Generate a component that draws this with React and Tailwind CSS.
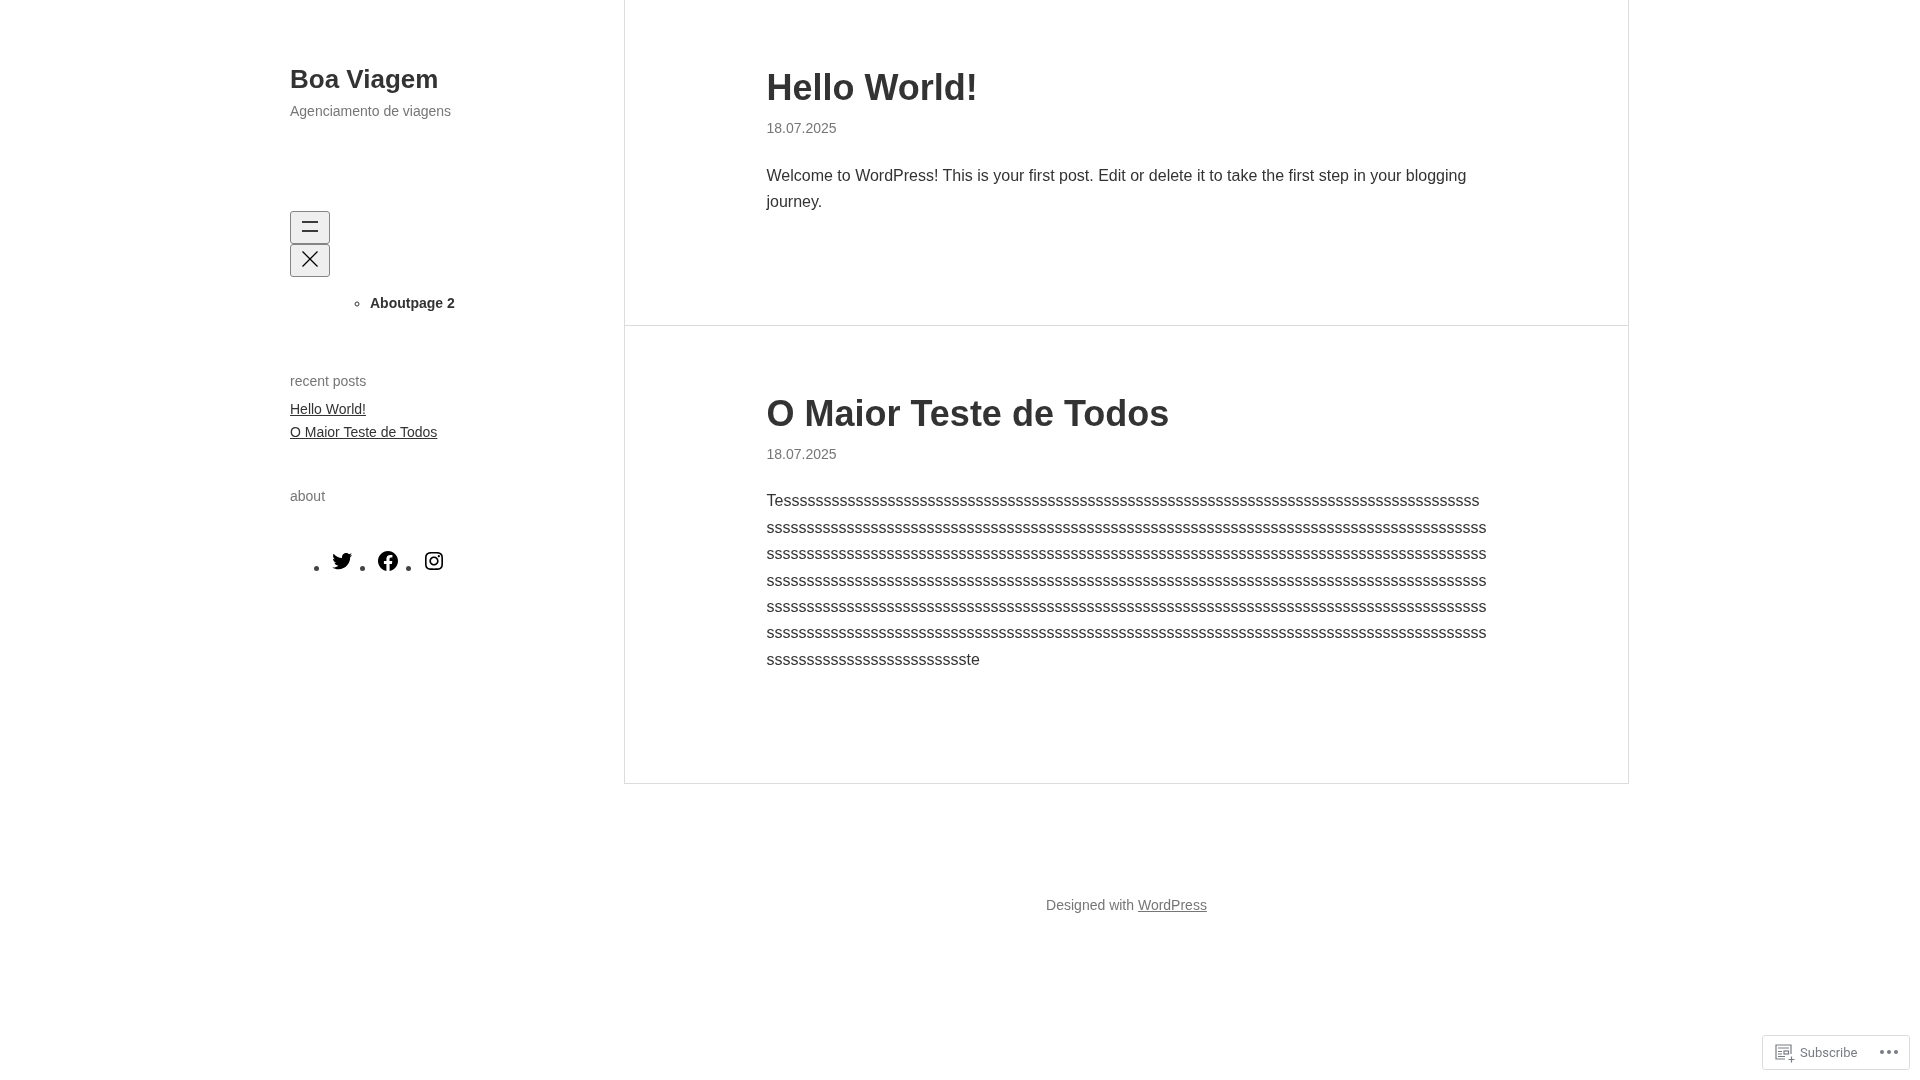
const testBody = "Te" + "s".repeat(561) + "ste";

const postClass = "pl-[141.5px] pr-[141.5px] pt-[67px] pb-[109.5px]";
const titleClass = "text-[36px] leading-[42px] font-bold text-[#333]";
const dateClass = "mt-[9px] text-sm leading-[20px] text-[#767676]";
const bodyClass = "mt-[24.5px] text-base leading-[26.4px] text-[#333] [overflow-wrap:anywhere]";
const widgetTitle = "text-sm leading-[20px] text-[#767676]";

const Twitter = () => (
  <svg viewBox="0 0 24 24" className="w-6 h-6" fill="#000">
    <path d="M22.23 5.924c-.736.326-1.527.547-2.357.646.847-.508 1.498-1.312 1.804-2.27-.793.47-1.67.812-2.606.996C18.325 4.498 17.258 4 16.078 4c-2.266 0-4.103 1.837-4.103 4.103 0 .322.036.635.106.935-3.41-.17-6.433-1.804-8.457-4.287-.353.607-.556 1.312-.556 2.064 0 1.424.724 2.68 1.825 3.415-.673-.022-1.305-.207-1.86-.514v.052c0 1.988 1.415 3.647 3.293 4.023-.344.095-.707.145-1.08.145-.265 0-.522-.026-.773-.074.522 1.63 2.038 2.817 3.833 2.85-1.404 1.1-3.174 1.757-5.096 1.757-.332 0-.66-.02-.98-.057 1.816 1.164 3.973 1.843 6.29 1.843 7.547 0 11.675-6.252 11.675-11.675 0-.178-.004-.355-.012-.53.802-.578 1.497-1.3 2.047-2.132z" />
  </svg>
);

const Facebook = () => (
  <svg viewBox="0 0 24 24" className="w-6 h-6" fill="#000">
    <path d="M12 2C6.5 2 2 6.5 2 12c0 5 3.7 9.1 8.4 9.9v-7H7.9V12h2.5V9.8c0-2.5 1.5-3.9 3.8-3.9 1.1 0 2.2.2 2.2.2v2.5h-1.3c-1.2 0-1.6.8-1.6 1.6V12h2.8l-.4 2.9h-2.3v7C18.3 21.1 22 17 22 12c0-5.5-4.5-10-10-10z" />
  </svg>
);

const Instagram = () => (
  <svg viewBox="0 0 24 24" className="w-6 h-6" fill="#000">
    <path d="M12,4.622c2.403,0,2.688,0.009,3.637,0.052c0.877,0.04,1.354,0.187,1.671,0.31c0.42,0.163,0.72,0.358,1.035,0.673c0.315,0.315,0.51,0.615,0.673,1.035c0.123,0.317,0.27,0.794,0.31,1.671c0.043,0.949,0.052,1.234,0.052,3.637s-0.009,2.688-0.052,3.637c-0.04,0.877-0.187,1.354-0.31,1.671c-0.163,0.42-0.358,0.72-0.673,1.035c-0.315,0.315-0.615,0.51-1.035,0.673c-0.317,0.123-0.794,0.27-1.671,0.31c-0.949,0.043-1.234,0.052-3.637,0.052s-2.688-0.009-3.637-0.052c-0.877-0.04-1.354-0.187-1.671-0.31c-0.42-0.163-0.72-0.358-1.035-0.673c-0.315-0.315-0.51-0.615-0.673-1.035c-0.123-0.317-0.27-0.794-0.31-1.671C4.631,14.688,4.622,14.403,4.622,12s0.009-2.688,0.052-3.637c0.04-0.877,0.187-1.354,0.31-1.671c0.163-0.42,0.358-0.72,0.673-1.035c0.315-0.315,0.615-0.51,1.035-0.673c0.317-0.123,0.794-0.27,1.671-0.31C9.312,4.631,9.597,4.622,12,4.622M12,3C9.556,3,9.249,3.01,8.289,3.054C7.331,3.098,6.677,3.25,6.105,3.472C5.513,3.702,5.011,4.01,4.511,4.511c-0.5,0.5-0.808,1.002-1.038,1.594C3.25,6.677,3.098,7.331,3.054,8.289C3.01,9.249,3,9.556,3,12c0,2.444,0.01,2.751,0.054,3.711c0.044,0.958,0.196,1.612,0.418,2.185c0.23,0.592,0.538,1.094,1.038,1.594c0.5,0.5,1.002,0.808,1.594,1.038c0.572,0.222,1.227,0.375,2.185,0.418C9.249,20.99,9.556,21,12,21s2.751-0.01,3.711-0.054c0.958-0.044,1.612-0.196,2.185-0.418c0.592-0.23,1.094-0.538,1.594-1.038c0.5-0.5,0.808-1.002,1.038-1.594c0.222-0.572,0.375-1.227,0.418-2.185C20.99,14.751,21,14.444,21,12s-0.01-2.751-0.054-3.711c-0.044-0.958-0.196-1.612-0.418-2.185c-0.23-0.592-0.538-1.094-1.038-1.594c-0.5-0.5-1.002-0.808-1.594-1.038c-0.572-0.222-1.227-0.375-2.185-0.418C14.751,3.01,14.444,3,12,3L12,3zM12,7.378c-2.552,0-4.622,2.069-4.622,4.622S9.448,16.622,12,16.622s4.622-2.069,4.622-4.622S14.552,7.378,12,7.378zM12,15c-1.657,0-3-1.343-3-3s1.343-3,3-3s3,1.343,3,3S13.657,15,12,15zM16.804,6.116c-0.596,0-1.08,0.484-1.08,1.08s0.484,1.08,1.08,1.08c0.596,0,1.08-0.484,1.08-1.08S17.401,6.116,16.804,6.116z" />
  </svg>
);

const SocialItem = ({ children }) => (
  <li className="flex items-end gap-[11px]">
    <span className="w-[5px] h-[5px] rounded-full bg-[#444] mb-[2px]" />
    {children}
  </li>
);

const NavButton = ({ children }) => (
  <button className="flex items-center justify-center w-10 h-[33px] bg-[#efefef] border border-[#858585] rounded-[3px]">
    {children}
  </button>
);

const Sidebar = () => (
  <aside className="w-[334px] shrink-0 pt-[62px]">
    <h1 className="text-[26px] leading-[34px] font-bold text-[#333]">Boa Viagem</h1>
    <p className="mt-[5px] text-sm leading-[20px] text-[#767676]">Agenciamento de viagens</p>

    <div className="mt-[90px] flex flex-col items-start">
      <NavButton>
        <svg width="24" height="24" viewBox="0 0 24 24" stroke="#000" strokeWidth="1.3" fill="none">
          <path d="M4 6h16M4 15h16" />
        </svg>
      </NavButton>
      <NavButton>
        <svg width="24" height="24" viewBox="0 0 24 24" stroke="#000" strokeWidth="1.3" fill="none">
          <path d="M4.5 2.5l15 15M19.5 2.5L4.5 17.5" />
        </svg>
      </NavButton>
    </div>
    <ul className="pl-10 mt-[16px]">
      <li className="list-none">
        <ul className="pl-10 list-[circle]">
          <li className="text-sm leading-[20px] font-bold text-[#333]">Aboutpage 2</li>
        </ul>
      </li>
    </ul>

    <h2 className={`${widgetTitle} mt-[58px]`}>recent posts</h2>
    <ul className="mt-[7px] text-sm leading-[23px] text-[#333]">
      <li><a href="#" className="underline">Hello World!</a></li>
      <li><a href="#" className="underline">O Maior Teste de Todos</a></li>
    </ul>

    <h2 className={`${widgetTitle} mt-[42px]`}>about</h2>
    <ul className="mt-[43px] ml-[24px] flex gap-[6px]">
      <SocialItem><Twitter /></SocialItem>
      <SocialItem><Facebook /></SocialItem>
      <SocialItem><Instagram /></SocialItem>
    </ul>
  </aside>
);

const App = () => (
  <div className="min-h-[1080px] font-['Liberation_Sans',Arial,sans-serif]">
    <div className="flex pl-[290px] [will-change:transform]">
      <Sidebar />
      <div className="w-[1005px]">
        <main className="border-x border-b border-[#dcdcdc]">
          <article className={`${postClass} border-b border-[#dcdcdc]`}>
            <h2 className={titleClass}>Hello World!</h2>
            <p className={dateClass}>18.07.2025</p>
            <p className={bodyClass}>
              Welcome to WordPress! This is your first post. Edit or delete it to take the first step in your blogging journey.
            </p>
          </article>
          <article className={postClass}>
            <h2 className={titleClass}>O Maior Teste de Todos</h2>
            <p className={dateClass}>18.07.2025</p>
            <p className={bodyClass}>{testBody}</p>
          </article>
        </main>
        <footer className="mt-[111px] text-center text-sm leading-[20px] text-[#767676]">
          Designed with <a href="#" className="underline">WordPress</a>
        </footer>
      </div>
    </div>

    <div className="fixed right-[10px] bottom-[10px] w-[148px] h-[35px] flex items-center border border-[#dcdcde] rounded-[3px] [will-change:transform] font-['Roboto',sans-serif] text-[13px] text-[#787c82]">
      <svg viewBox="0 0 18 18" className="ml-[12px] w-[18px] h-[18px] overflow-visible" fill="none" stroke="#787c82" strokeWidth="1.2">
        <path d="M10 15H1V1h15v9" />
        <path d="M3 4h11M3 7.5h4M3 10h4M3 12.5h7" />
        <rect x="9" y="7" width="4.5" height="3" />
        <path d="M16.5 12.5v6M13.5 15.5h6" />
      </svg>
      <span className="ml-[7px]">Subscribe</span>
      <span className="ml-auto mr-[11px] mb-[2px] flex gap-[3px]">
        <span className="w-[4px] h-[4px] rounded-full bg-[#787c82]" />
        <span className="w-[4px] h-[4px] rounded-full bg-[#787c82]" />
        <span className="w-[4px] h-[4px] rounded-full bg-[#787c82]" />
      </span>
    </div>
  </div>
);

export default App;
